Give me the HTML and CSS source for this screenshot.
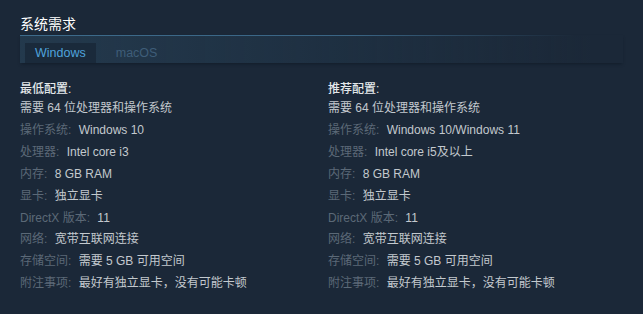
FILE: index.html
```html
<!DOCTYPE html>
<html lang="zh-CN">
<head>
<meta charset="utf-8">
<link rel="stylesheet" href="styles.css">
</head>
<body>
<div class="sysreq">
  <h2 class="title">系统需求</h2>
  <div class="tabs">
    <div class="tab active">Windows</div>
    <div class="tab">macOS</div>
  </div>
  <div class="cols">
    <div class="col">
      <div class="col-title">最低配置:</div>
      <ul class="list">
        <li>需要 64 位处理器和操作系统</li>
        <li><span class="lbl">操作系统:</span> Windows 10</li>
        <li><span class="lbl">处理器:</span> Intel core i3</li>
        <li><span class="lbl">内存:</span> 8 GB RAM</li>
        <li><span class="lbl">显卡:</span> 独立显卡</li>
        <li><span class="lbl">DirectX 版本:</span> 11</li>
        <li><span class="lbl">网络:</span> 宽带互联网连接</li>
        <li><span class="lbl">存储空间:</span> 需要 5 GB 可用空间</li>
        <li><span class="lbl">附注事项:</span> 最好有独立显卡，没有可能卡顿</li>
      </ul>
    </div>
    <div class="col">
      <div class="col-title">推荐配置:</div>
      <ul class="list">
        <li>需要 64 位处理器和操作系统</li>
        <li><span class="lbl">操作系统:</span> Windows 10/Windows 11</li>
        <li><span class="lbl">处理器:</span> Intel core i5及以上</li>
        <li><span class="lbl">内存:</span> 8 GB RAM</li>
        <li><span class="lbl">显卡:</span> 独立显卡</li>
        <li><span class="lbl">DirectX 版本:</span> 11</li>
        <li><span class="lbl">网络:</span> 宽带互联网连接</li>
        <li><span class="lbl">存储空间:</span> 需要 5 GB 可用空间</li>
        <li><span class="lbl">附注事项:</span> 最好有独立显卡，没有可能卡顿</li>
      </ul>
    </div>
  </div>
</div>
</body>
</html>
```
FILE: styles.css
```css
html, body {
  margin: 0;
  padding: 0;
  background: #1b2838;
  height: 100%;
}
body {
  font-family: "Liberation Sans", Arial, "Noto Sans CJK SC", sans-serif;
  font-size: 12px;
  color: #acb2b8;
}
.sysreq {
  padding: 14px 20px 0 20px;
}
.title {
  margin: 0;
  font-size: 14px;
  font-weight: normal;
  color: #ffffff;
  line-height: 20px;
  padding-bottom: 1px;
  height: 20px;
}
.tabs {
  display: flex;
  align-items: flex-end;
  height: 27px;
  border-top: 1px solid transparent;
  border-image: linear-gradient(to right, #3d6b8b 0%, #3a6585 55%, #1b2838 92%) 1;
  background: linear-gradient(to right, rgba(42, 71, 94, 0.55) 0%, rgba(35, 60, 81, 0.35) 55%, rgba(27, 40, 56, 0) 95%);
  box-shadow: 0 2px 3px -1px rgba(10, 18, 28, 0.5);
  padding-left: 5px;
}
.tab {
  height: 20px;
  line-height: 20px;
  padding: 0 10px;
  font-size: 12.5px;
  color: #3e5d78;
}
.tab.active {
  background: #1a2a3b;
  color: #4fa3dc;
  margin-right: 10px;
}
.cols {
  display: grid;
  grid-template-columns: 308px 1fr;
  padding-top: 16px;
}
.col-title {
  color: #e4e8eb;
  line-height: 20px;
  height: 19px;
  font-weight: 500;
  font-size: 12px;
}
.list {
  list-style: none;
  margin: 0;
  padding: 0;
}
.list li {
  line-height: 21.9px;
  color: #c3c9ce;
  white-space: nowrap;
}
.lbl {
  color: #5b6977;
  margin-right: 4px;
}
```
